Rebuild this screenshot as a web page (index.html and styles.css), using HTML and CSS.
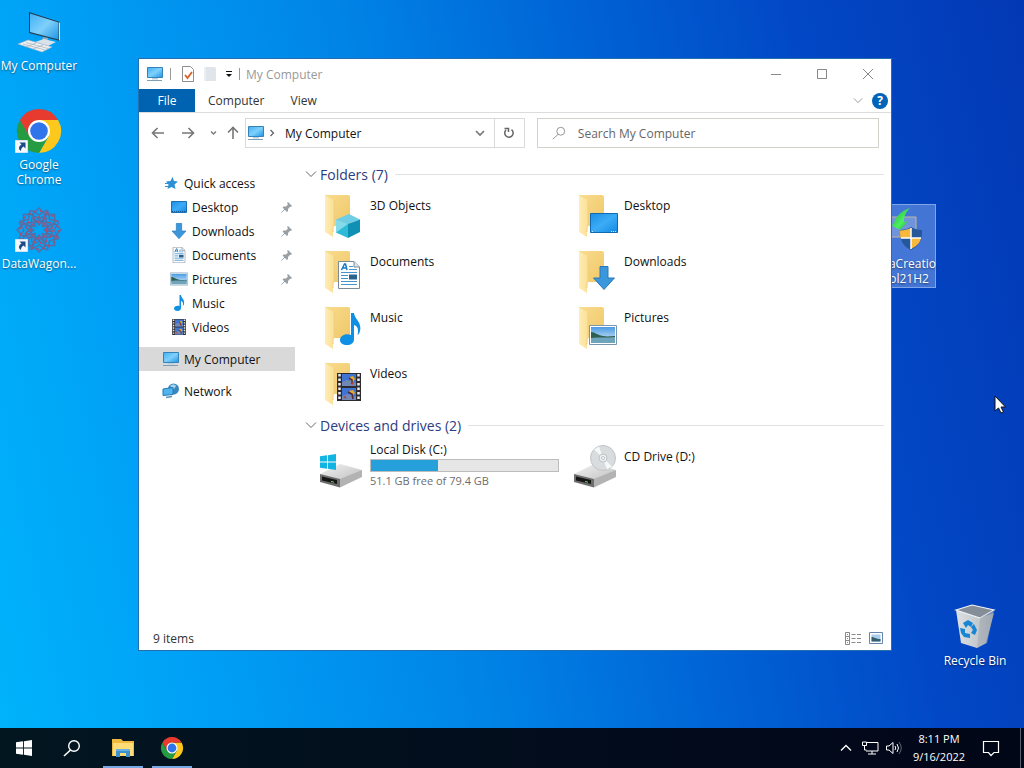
FILE: index.html
```html
<!DOCTYPE html>
<html lang="en">
<head>
<meta charset="utf-8">
<title>My Computer</title>
<link rel="stylesheet" href="styles.css">
</head>
<body>
<svg class="sprite" aria-hidden="true">
  <defs>
    <linearGradient id="g-screen" x1="0" y1="0" x2="1" y2="1"><stop offset="0" stop-color="#3fb0f5"/><stop offset=".5" stop-color="#7fd0fb"/><stop offset="1" stop-color="#1e94e4"/></linearGradient>
    <linearGradient id="g-desk" x1="0" y1="0" x2="1" y2="1"><stop offset="0" stop-color="#1b8fe6"/><stop offset=".5" stop-color="#3cacf6"/><stop offset="1" stop-color="#1389e4"/></linearGradient>
    <linearGradient id="g-folder" x1="0" y1="0" x2="1" y2="1"><stop offset="0" stop-color="#f9dc8f"/><stop offset="1" stop-color="#efc767"/></linearGradient>
    <linearGradient id="g-flap" x1="0" y1="0" x2="1" y2="0"><stop offset="0" stop-color="#ffedb4"/><stop offset="1" stop-color="#fbdf95"/></linearGradient>
    <linearGradient id="g-drive" x1="0" y1="0" x2="1" y2="1"><stop offset="0" stop-color="#f2f2f2"/><stop offset="1" stop-color="#bdbdbd"/></linearGradient>
    <linearGradient id="g-sky" x1="0" y1="0" x2="0" y2="1"><stop offset="0" stop-color="#4a9be4"/><stop offset="1" stop-color="#dff1fa"/></linearGradient>
    <linearGradient id="g-bin" x1="0" y1="0" x2="1" y2="0"><stop offset="0" stop-color="#dde1e4"/><stop offset=".6" stop-color="#c3c8cd"/><stop offset="1" stop-color="#959ba5"/></linearGradient>
    <linearGradient id="g-green" x1="0" y1="0" x2="1" y2="1"><stop offset="0" stop-color="#1fa53a"/><stop offset=".6" stop-color="#4cf060"/><stop offset="1" stop-color="#16a030"/></linearGradient>
  </defs>

  <symbol id="monitor" viewBox="0 0 18 16">
    <path d="M1.500 1.500h15v10h-15z" fill="url(#g-screen)" stroke="#3482b8"/>
    <path d="M6 12h6v1.500H6z" fill="#b8d2e2"/>
    <path d="M1 14.500h15" stroke="#7f9fb5"/>
  </symbol>
  <symbol id="folder" viewBox="0 0 48 48">
    <path d="M9 4h23q2 0 2 2v29H12z" fill="url(#g-folder)"/>
    <path d="M9 4.500l9 4.500v26l-1 1v10L9 41z" fill="url(#g-flap)"/>
    <path d="M18 9v26l-1 1v5" fill="none" stroke="#f0cf7e"/>
  </symbol>
  <symbol id="arrow-down" viewBox="0 0 22 24">
    <path d="M7 .5h8V12h6.500L11 23.500.500 12H7z" fill="#3a97dc" stroke="#2878b8"/>
  </symbol>
  <symbol id="note" viewBox="0 0 22 32">
    <path d="M12 0h3c1 7 8 9 6 18-.5 2-1 3-2.500 4 1.500-6 0-9-3.500-10v14c0 4-3 6-7 6s-7-2-7-5c0-4 5-7 11-5z" fill="#0f90e4"/>
  </symbol>
  <symbol id="document" viewBox="0 0 22 28">
    <path d="M.5.5H16L21.500 6v21.500H.5z" fill="#fff" stroke="#7c8a96"/>
    <path d="M16 .5V6h5.500" fill="#dfe5ea" stroke="#7c8a96"/>
    <path d="M3.500 9L6.500 3h1L9 9M4.500 7h4" fill="none" stroke="#1878c0" stroke-width="1.500"/>
    <path d="M11 5.500h4M11 8.500h8M3 11.500h16M3 14.500h7M3 17.500h7M3 20.500h16M3 23.500h16" stroke="#4794cb" stroke-width="1.200"/>
    <path d="M11 13.500h8v5h-8z" fill="#28648f"/>
  </symbol>
  <symbol id="picture" viewBox="0 0 28 20">
    <path d="M.5.5h27v19H.5z" fill="#fff" stroke="#7996ad"/>
    <path d="M2 2h24v16H2z" fill="url(#g-sky)"/>
    <path d="M2 7c4 0 6 3 12 4s8 0 12 0v3H2z" fill="#2f5f52"/>
    <path d="M2 13c8-1 16 0 24-1v6H2z" fill="#6fa4bd"/>
  </symbol>
  <symbol id="film" viewBox="0 0 24 28">
    <path d="M0 0h24v28H0z" fill="#2b2b30"/>
    <path d="M2.500 1v27M21.500 1v27" stroke="#eee" stroke-width="2.500" stroke-dasharray="2.500 2"/>
    <path d="M5 1h14v12H5zM5 15h14v12H5z" fill="#3f74d2"/>
    <path d="M5 9l5-2 9 3v3H5zM5 23l6-2 8 3v3H5z" fill="#7287b4"/>
    <path d="M13 4l3-1 2 3-2 3h-2zM12 18l4-1 2 3-3 3z" fill="#e8a920"/>
    <path d="M12 5l3 2v4M11 19l4 2 1 5" stroke="#4c2637" stroke-width="1.500" fill="none"/>
    <path d="M14 9l3 1-2 2zM6 24l3-1v3z" fill="#c03b2c"/>
  </symbol>
  <symbol id="cube" viewBox="0 0 24 24">
    <path d="M0 5.500L13 0l11 5.500L12 10z" fill="#6fcde6"/>
    <path d="M0 5.500L12 10v14L0 18.500z" fill="#2fbad5"/>
    <path d="M0 5.500L12 10 0 18.500z" fill="#a5e8f2" opacity=".7"/>
    <path d="M24 5.500L12 10v14l12-6z" fill="#0e91b4"/>
  </symbol>
  <symbol id="chrome" viewBox="0 0 48 48">
    <path d="M24 13h19.100A22 22 0 0 1 24 46l9.500-16.500z" fill="#fbc81b"/>
    <path d="M4.900 13A22 22 0 0 0 24 46l9.500-16.500L24 24l-9.500 5.500z" fill="#269c42"/>
    <path d="M4.900 13l9.600 16.500L24 13h19.100A22 22 0 0 0 4.900 13z" fill="#e63b2e"/>
    <circle cx="24" cy="24" r="11" fill="#fff"/>
    <circle cx="24" cy="24" r="8.800" fill="#2f74ea"/>
  </symbol>
  <symbol id="shortcut" viewBox="0 0 13 13">
    <path d="M.5.5h12v12H.5z" fill="#f5f9fd" stroke="#d3e2ee"/>
    <path d="M4.500 2.500H10.500v6L8.500 6.500C6.500 8 6 9 6 11 3 9 3.500 6.500 6.500 4.500z" fill="#1c4a86"/>
  </symbol>
  <symbol id="pin" viewBox="0 0 12 12">
    <path d="M7 1l4 4-1 1-1-.3-2 2.300v2L6 11 1.500 6.500l1-1H5L7 3.500 6 2z" fill="#989fa5"/><path d="M4 8l-3.500 3.500" stroke="#989fa5"/>
  </symbol>
  <symbol id="drive" viewBox="0 0 48 48">
    <path d="M4 32L24 22 46 28 24 41z" fill="url(#g-drive)"/>
    <path d="M4 32l20 5v8.500L4 40z" fill="#6d6d6d"/>
    <path d="M6 34.500l15 3.500v4L6 38.500z" fill="#161616"/>
    <path d="M24 37l22-9v7L24 45.500z" fill="#b3b3b3"/>
    <path d="M15 39.500l3 .7" stroke="#6be06b"/>
  </symbol>
  <symbol id="chev" viewBox="0 0 12 8"><path d="M1 1.500l5 5 5-5" fill="none" stroke="currentColor"/></symbol>
  <symbol id="winlogo" viewBox="0 0 18 18">
    <path d="M0 2.500L8 1.400V8.500H0zM9 1.300L18 0v8.500H9zM0 9.500h8v7.100L0 15.500zM9 9.500h9V18L9 16.700z" fill="currentColor"/>
  </symbol>
  <symbol id="arrow" viewBox="0 0 14 12"><path d="M13 6H2M6.500 1L1.500 6l5 5" fill="none" stroke="currentColor" stroke-width="1.600"/></symbol>
  <symbol id="glass" viewBox="0 0 16 16"><circle cx="10" cy="6" r="4.500" fill="none" stroke="currentColor"/><path d="M7 9.500L1 15" stroke="currentColor"/></symbol>
</svg>

<main class="desktop">
  <div class="shortcuts-left">
    <a class="shortcut" href="#my-computer">
      <svg class="icon-48" viewBox="0 0 48 48">
        <path d="M14 4l31 10v19L14 25z" fill="#253d50"/><path d="M15 5.500l28.500 9V31.500L15 24z" fill="url(#g-screen)"/><path d="M44.500 14.500v18" stroke="#d8e4ec"/>
        <path d="M28 29l5 1v3l-6-1z" fill="#96a8b5"/><path d="M20 34l9-3 12 3-8 4z" fill="#d9e2e8"/>
        <path d="M3 36l10-4 24 7-10 5z" fill="#eef1f3" stroke="#a9b5be" stroke-width=".6"/><path d="M8 36l22 6M11 34.500l22 6M11 39l10-4M18 41l10-4" stroke="#a4b0b9" stroke-width=".7"/>
      </svg>
      <span class="shortcut-label">My Computer</span>
    </a>
    <a class="shortcut" href="#chrome-app">
      <span class="badged"><svg class="icon-48"><use href="#chrome"/></svg><svg class="badge"><use href="#shortcut"/></svg></span>
      <span class="shortcut-label">Google Chrome</span>
    </a>
    <a class="shortcut" href="#datawagon">
      <span class="badged">
        <svg class="icon-48" viewBox="-24 -24 48 48">
          <g fill="none" stroke="#5c6aa4" stroke-width="1.400">
            <path id="petal" d="M0-5L7-15 0-22-7-15zM-4-7L4-14M4-7L-4-14M-8-20L0-15 8-20"/>
            <use href="#petal" transform="rotate(45)"/><use href="#petal" transform="rotate(90)"/><use href="#petal" transform="rotate(135)"/><use href="#petal" transform="rotate(180)"/><use href="#petal" transform="rotate(225)"/><use href="#petal" transform="rotate(270)"/><use href="#petal" transform="rotate(315)"/>
          </g>
          <g fill="none" stroke="#a8506f" stroke-width="2" stroke-dasharray="2 4"><circle r="19"/><circle r="13"/><circle r="8"/></g>
        </svg>
        <svg class="badge"><use href="#shortcut"/></svg>
      </span>
      <span class="shortcut-label">DataWagon...</span>
    </a>
  </div>

  <a class="shortcut selected media-tool" href="#media">
    <svg class="icon-48" viewBox="0 0 48 48">
      <path d="M10 11h31v20H10z" fill="#6f94dc" stroke="#c2b49b"/>
      <path d="M35 2C26 5 20 11 19 18l-3 1 9 5 8-9-4 1c0-6 1-9 6-14z" fill="url(#g-green)"/>
      <path d="M36 21c3 2 7 3 11 3 0 9-2 16-11 20-9-4-11-11-11-20 4 0 8-1 11-3z" fill="#27579b"/>
      <path d="M36 32H26c2 5 4 8 10 11zM36 22v10h10c.4-3 .5-5 .5-7.500-4 0-8-1-10.500-2.500z" fill="#27579b"/>
      <path d="M36 22v10H25.500c-.4-3-.5-5-.5-7.500 4 0 8-1 11-2.500zM36 32v11c6-3 9-6 10-11z" fill="#f8b83a"/>
      <path d="M36 22v21M26 32h20" stroke="#fff" stroke-width="1.500"/>
    </svg>
    <span class="shortcut-label">MediaCreatio<br>nTool21H2</span>
  </a>

  <a class="shortcut recycle" href="#bin">
    <svg class="icon-48" viewBox="0 0 48 48">
      <path d="M5 7l5 33 16 5 9-5 8-30-15 5z" fill="url(#g-bin)"/>
      <path d="M5 7l16-5 22 5-14 8z" fill="#858d98" stroke="#f2f5f7" stroke-width="1.200"/>
      <path d="M29 15l-3 30 10-5 7-33z" fill="#a8adb5" opacity=".65"/>
      <path d="M12 20l5-3 5 3-2 4-3-2-2 3zM23 21l3 6-2 5-4-2 2-3-2-3zM9 25l5 1v4l5 1v4l-6-1-3-4z" fill="#1685d4"/>
    </svg>
    <span class="shortcut-label">Recycle Bin</span>
  </a>

  <section class="window" id="my-computer" aria-label="My Computer">
    <header class="titlebar">
      <svg class="icon-wide"><use href="#monitor"/></svg>
      <span class="divider"></span>
      <button class="plain" aria-label="Properties"><svg width="14" height="16" viewBox="0 0 14 16"><path d="M1.500.5h8l3 3v12h-11z" fill="#fff" stroke="#8e8e8e"/><path d="M4 9l2.500 3L11 6" fill="none" stroke="#d9602c" stroke-width="1.800"/></svg></button>
      <button class="plain" aria-label="New folder"><svg width="14" height="16" viewBox="0 0 14 16"><path d="M1 1h10l2 1v13H1z" fill="#dfe5ea"/><path d="M1 1h2v14H1z" fill="#ebeff2"/></svg></button>
      <button class="plain caret" aria-label="Customize toolbar"><svg width="8" height="8" viewBox="0 0 8 8"><path d="M1 1.500h6" stroke="#111"/><path d="M1 4h6L4 7z" fill="#111"/></svg></button>
      <span class="divider"></span>
      <h1 class="title">My Computer</h1>
      <div class="window-buttons">
        <button class="plain" aria-label="Minimize"><svg width="12" height="12"><path d="M1 6.500h10" stroke="#888"/></svg></button>
        <button class="plain" aria-label="Maximize"><svg width="12" height="12"><path d="M1.500 1.500h9v9h-9z" stroke="#888" fill="none"/></svg></button>
        <button class="plain" aria-label="Close"><svg width="12" height="12"><path d="M1 1l10 10M11 1L1 11" stroke="#888"/></svg></button>
      </div>
    </header>

    <nav class="ribbon" aria-label="Ribbon">
      <button class="tab tab-file">File</button>
      <button class="tab">Computer</button>
      <button class="tab">View</button>
      <button class="plain expand" aria-label="Expand the ribbon"><svg width="10" height="7"><use href="#chev"/></svg></button>
      <button class="help" aria-label="Help">?</button>
    </nav>

    <div class="navbar">
      <button class="plain nav-btn" aria-label="Back"><svg width="14" height="12"><use href="#arrow"/></svg></button>
      <button class="plain nav-btn" aria-label="Forward"><svg class="flip" width="14" height="12"><use href="#arrow"/></svg></button>
      <button class="plain nav-small" aria-label="Recent locations"><svg width="7" height="6" viewBox="0 0 7 6"><path d="M1 1.500L3.500 4 6 1.500" fill="none" stroke="currentColor" stroke-width="1.300"/></svg></button>
      <button class="plain nav-small" aria-label="Up"><svg class="up" width="14" height="12"><use href="#arrow"/></svg></button>
      <div class="address">
        <svg class="icon-wide"><use href="#monitor"/></svg>
        <svg width="12" height="8" viewBox="0 0 12 8"><path d="M5.500 1l3 3-3 3" fill="none" stroke="#666" stroke-width="1.300"/></svg>
        <a class="crumb" href="#my-computer">My Computer</a>
        <button class="plain drop" aria-label="Previous locations"><svg width="10" height="8" viewBox="0 0 10 8"><path d="M1 2l4 4 4-4" fill="none" stroke="#777" stroke-width="1.700"/></svg></button>
        <button class="plain refresh" aria-label="Refresh"><svg width="12" height="12" viewBox="0 0 12 12"><path d="M3 3a4.200 4.200 0 1 0 5.500-.3M1.500 1.500h4V5" fill="none" stroke="#666" stroke-width="1.500"/></svg></button>
      </div>
      <label class="search"><svg width="14" height="14"><use href="#glass"/></svg><input class="search-input" type="search" placeholder="Search My Computer" aria-label="Search My Computer"></label>
    </div>

    <div class="body">
      <nav class="sidebar" aria-label="Navigation pane">
        <a class="side-item" href="#quick"><svg class="side-icon" viewBox="0 0 18 16"><path d="M10.500 2l1.500 4 4 .5-3.500 3 1 4.500-4-2-4 2 1-4.500L4 6.500l4.500-.5z" fill="#2d8fd4"/><path d="M3 11.500h4M3 8.500h3" stroke="#2d8fd4"/></svg>Quick access</a>
        <a class="side-item child" href="#desktop"><svg class="side-icon" viewBox="0 0 18 16"><path d="M1.500 2.500h15v11h-15z" fill="url(#g-desk)" stroke="#1a6fb5"/><path d="M2 12.500h14" stroke="#135c9c" stroke-dasharray="1 1"/></svg><span>Desktop</span><svg class="pin"><use href="#pin"/></svg></a>
        <a class="side-item child" href="#downloads"><svg class="side-icon"><use href="#arrow-down"/></svg><span>Downloads</span><svg class="pin"><use href="#pin"/></svg></a>
        <a class="side-item child" href="#documents"><svg class="side-icon"><use href="#document"/></svg><span>Documents</span><svg class="pin"><use href="#pin"/></svg></a>
        <a class="side-item child" href="#pictures"><svg class="side-icon"><use href="#picture"/></svg><span>Pictures</span><svg class="pin"><use href="#pin"/></svg></a>
        <a class="side-item child" href="#music"><svg class="side-icon"><use href="#note"/></svg><span>Music</span></a>
        <a class="side-item child" href="#videos"><svg class="side-icon"><use href="#film"/></svg><span>Videos</span></a>
        <a class="side-item root current" href="#my-computer"><svg class="side-icon"><use href="#monitor"/></svg>My Computer</a>
        <a class="side-item root" href="#network"><svg class="side-icon" viewBox="0 0 18 16"><circle cx="11.500" cy="6" r="5.500" fill="#3b87bd"/><path d="M8 3c2-2 5-2 6 0l-2 3z" fill="#a5d6f0"/><path d="M1 6l10-1.500v7L1 12.500z" fill="#4eb5ef" stroke="#2678b2"/><path d="M4 14.500l6-1" stroke="#5b92b4" stroke-width="1.500"/></svg>Network</a>
      </nav>

      <div class="content">
        <section class="group">
          <h2 class="group-head"><svg width="12" height="8"><use href="#chev"/></svg>Folders (7)</h2>
          <div class="tiles">
            <a class="tile" href="#3d"><span class="badged"><svg class="icon-48"><use href="#folder"/></svg><svg class="overlay o-cube"><use href="#cube"/></svg></span><span class="tile-text">3D Objects</span></a>
            <a class="tile" href="#desktop"><span class="badged"><svg class="icon-48"><use href="#folder"/></svg><svg class="overlay o-desk" viewBox="0 0 28 20"><path d="M.5.5h27v19H.5z" fill="url(#g-desk)" stroke="#1169ae"/><path d="M2 18.500h2M21 18.500h5" stroke="#c9e8ff" stroke-dasharray="1 1"/></svg></span><span class="tile-text">Desktop</span></a>
            <a class="tile" href="#documents"><span class="badged"><svg class="icon-48"><use href="#folder"/></svg><svg class="overlay o-doc"><use href="#document"/></svg></span><span class="tile-text">Documents</span></a>
            <a class="tile" href="#downloads"><span class="badged"><svg class="icon-48"><use href="#folder"/></svg><svg class="overlay o-down"><use href="#arrow-down"/></svg></span><span class="tile-text">Downloads</span></a>
            <a class="tile" href="#music"><span class="badged"><svg class="icon-48"><use href="#folder"/></svg><svg class="overlay o-note"><use href="#note"/></svg></span><span class="tile-text">Music</span></a>
            <a class="tile" href="#pictures"><span class="badged"><svg class="icon-48"><use href="#folder"/></svg><svg class="overlay o-pic"><use href="#picture"/></svg></span><span class="tile-text">Pictures</span></a>
            <a class="tile" href="#videos"><span class="badged"><svg class="icon-48"><use href="#folder"/></svg><svg class="overlay o-film"><use href="#film"/></svg></span><span class="tile-text">Videos</span></a>
          </div>
        </section>
        <section class="group">
          <h2 class="group-head"><svg width="12" height="8"><use href="#chev"/></svg>Devices and drives (2)</h2>
          <div class="tiles">
            <a class="tile" href="#c"><span class="badged"><svg class="icon-48"><use href="#drive"/></svg><svg class="overlay o-win"><use href="#winlogo"/></svg></span>
              <span class="disk"><span id="disk-c">Local Disk (C:)</span><progress class="usage" value="36" max="100" aria-labelledby="disk-c"></progress><span class="free">51.1 GB free of 79.4 GB</span></span></a>
            <a class="tile" href="#d"><svg class="icon-48" viewBox="0 0 48 48"><use href="#drive"/><circle cx="33" cy="16" r="12.500" fill="#d9dcde" stroke="#c0c5c8"/><path d="M33 16L24 7.500l5-3zM33 16l9 8.500-5 3z" fill="#f6f8f8"/><circle cx="33" cy="16" r="4" fill="#eef0f0" stroke="#bcc2c5"/><circle cx="33" cy="16" r="1.500" fill="#fff" stroke="#bcc2c5"/></svg><span class="tile-text">CD Drive (D:)</span></a>
          </div>
        </section>
      </div>
    </div>

    <footer class="status">
      <span>9 items</span>
      <button class="plain" aria-label="Details view"><svg width="16" height="13" viewBox="0 0 16 13"><path d="M.5.500h4v12h-4zM.5 4.500h4M.5 8.500h4M2 2.500h1M2 6.500h1M2 10.500h1M6.500 2.500h4M12 2.500h4M6.500 6.500h4M12 6.500h4M6.500 10.500h4M12 10.500h4" fill="none" stroke="#888"/></svg></button>
      <button class="plain" aria-label="Large icons view"><svg width="14" height="12" viewBox="0 0 14 12"><path d="M.5.5h13v11H.5z" fill="#fff" stroke="#6684ac"/><path d="M2.500 2.500h9v7h-9z" fill="#a9cdea"/><path d="M2.500 5c3 0 4 2 9 2v2.500h-9z" fill="#345f70"/></svg></button>
    </footer>
  </section>

  <svg class="pointer" viewBox="0 0 12 19"><path d="M1 1v15l3.500-3 2.500 5 2.500-1L7 12h4.500z" fill="#fff" stroke="#111"/></svg>
</main>

<footer class="taskbar">
  <button class="task" aria-label="Start"><svg width="16" height="16"><use href="#winlogo"/></svg></button>
  <button class="task" aria-label="Search"><svg width="18" height="18" viewBox="0 0 18 18"><circle cx="11" cy="7" r="5.300" fill="none" stroke="#fff" stroke-width="1.400"/><path d="M7.500 11L1 17" stroke="#fff" stroke-width="1.600"/></svg></button>
  <div class="running">
    <button class="task open" aria-label="File Explorer"><svg width="22" height="20" viewBox="0 0 22 20"><path d="M0 1h9l2 2h11v15H0z" fill="#f0b93f"/><path d="M1 5h20v13H1z" fill="#ffdc76"/><path d="M4 19v-8h14v8h-4v-4H8v4z" fill="#3f90ce"/><path d="M4 11h14v2H4z" fill="#66b0e2"/></svg></button>
    <button class="task open" aria-label="Google Chrome"><svg width="24" height="24"><use href="#chrome"/></svg></button>
  </div>
  <div class="tray">
    <button class="tray-btn" aria-label="Show hidden icons"><svg width="12" height="8" viewBox="0 0 12 8"><path d="M1 6.500l5-5 5 5" fill="none" stroke="#fff" stroke-width="1.300"/></svg></button>
    <button class="tray-btn" aria-label="Network"><svg width="17" height="14" viewBox="0 0 17 14"><path d="M5 1.500h11v8.500H4M10 10v3M6 13h8M.500 1h4v3.500h-4zM2.500 4.500V9h2" fill="none" stroke="#fff"/></svg></button>
    <button class="tray-btn" aria-label="Volume"><svg width="17" height="14" viewBox="0 0 17 14"><path d="M.5 5h2.500L7 1.500v11L3 9H.5zM9 5q1.500 2 0 4M11 3q3 4 0 8" fill="none" stroke="#fff"/><path d="M13 1q4.500 6 0 12" fill="none" stroke="#5b6676"/></svg></button>
    <button class="clock"><time datetime="2022-09-16T20:11">8:11 PM<br>9/16/2022</time></button>
    <button class="notify" aria-label="Notifications"><svg width="18" height="17" viewBox="0 0 18 17"><path d="M1.500 1.500h15v11H12L9 15.500 6.500 12.500h-5z" fill="none" stroke="#fff" stroke-width="1.200"/></svg></button>
    <button class="show-desktop" aria-label="Show desktop"></button>
  </div>
</footer>
</body>
</html>
```
FILE: styles.css
```css
* { box-sizing: border-box; }

body {
  margin: 0;
  height: 100vh;
  display: flex;
  flex-direction: column;
  overflow: hidden;
  font-family: "Open Sans", "Noto Sans", sans-serif;
  font-size: 12px;
  line-height: 15px;
  color: #111;
  background: linear-gradient(78deg, #00b4fb 0%, #00a0f6 18%, #0084e6 42%, #0060d4 64%, #0248c6 80%, #0338b4 100%);
}

button { font: inherit; color: inherit; border: 0; padding: 0; background: none; }
a { color: inherit; text-decoration: none; }
svg { display: block; flex: none; }
.sprite { position: absolute; width: 0; height: 0; }
.plain { display: flex; align-items: center; justify-content: center; }
.icon-48 { width: 48px; height: 48px; }
.icon-wide { width: 18px; height: 16px; }
.badged { position: relative; flex: none; }
.badge { position: absolute; left: 0; bottom: 2px; width: 13px; height: 13px; }

/* Desktop */
.desktop { flex: 1; position: relative; min-height: 0; }
.shortcuts-left { padding-top: 8px; width: 78px; }
.shortcut {
  display: flex;
  flex-direction: column;
  align-items: center;
  gap: 2px;
  color: #fff;
  text-align: center;
  text-shadow: 0 1px 2px #00000080;
}
.shortcuts-left .shortcut { min-height: 99px; }
.recycle { position: absolute; right: 10px; bottom: 60px; width: 78px; }
.media-tool { position: absolute; left: 861px; top: 204px; width: 75px; padding: 1px 0; }
.selected { background: #6b95e2a0; border: 1px solid #7fa5e8; }
.pointer { position: absolute; left: 994px; top: 395px; width: 12px; height: 19px; }

/* Window */
.window {
  position: absolute;
  inset: 58px 132px 77px 138px;
  display: flex;
  flex-direction: column;
  background: #fff;
  border: 1px solid #236fb0;
}
.titlebar { display: flex; align-items: center; height: 30px; padding-left: 7px; }
.titlebar .divider { width: 1px; height: 12px; margin: 0 6px; background: #999; }
.titlebar .icon-wide + .divider { margin-right: 10px; }
.titlebar > .plain + .plain { margin-left: 8px; }
.title { margin: 0; font-size: 12px; font-weight: 400; color: #999; }
.window-buttons { display: flex; margin-left: auto; }
.window-buttons .plain { width: 46px; height: 30px; }

.ribbon { display: flex; align-items: center; height: 24px; border-bottom: 1px solid #dcdcdc; color: #333; }
.tab { height: 23px; padding: 0 13px; }
.tab-file { width: 56px; background: #0063b1; color: #fff; }
.expand { margin-left: auto; width: 20px; color: #888; }
.help { width: 16px; height: 16px; margin: 0 3px 0 4px; border-radius: 50%; background: #0064b8; color: #fff; font-weight: 700; }

.navbar { display: flex; align-items: center; height: 40px; padding: 0 12px 0 4px; }
.nav-btn { width: 30px; height: 24px; color: #777; }
.nav-small { width: 20px; height: 24px; color: #777; }
.flip { transform: rotate(180deg); }
.up { transform: rotate(90deg); }
.address { flex: 47; display: flex; align-items: center; height: 30px; margin-left: 2px; padding-left: 1px; border: 1px solid #d9d9d9; }
.crumb { flex: 1; padding-left: 8px; }
.drop { width: 28px; height: 28px; }
.refresh { width: 30px; height: 28px; border-left: 1px solid #d9d9d9; }
.search { flex: 53; display: flex; align-items: center; gap: 12px; height: 30px; margin-left: 12px; padding: 0 14px; border: 1px solid #d3d3cb; color: #888; }
.search-input { flex: 1; min-width: 0; padding: 0; border: 0; outline: 0; background: none; font: inherit; color: #333; }
.search-input::placeholder { color: #666; opacity: 1; }

.body { flex: 1; display: flex; min-height: 0; }
.sidebar { width: 156px; padding-top: 18px; }
.side-item { display: flex; align-items: center; gap: 4px; height: 24px; padding: 0 2px 0 23px; }
.side-item.child { padding-left: 31px; }
.side-item.root { margin-top: 8px; }
.current { background: #d9d9d9; }
.side-icon { width: 18px; height: 16px; }
.pin { width: 12px; height: 12px; margin-left: auto; }

.content { flex: 1; padding: 11px 7px 0 10px; overflow: hidden; }
.group-head { display: flex; align-items: center; gap: 3px; margin: 0; height: 20px; font-size: 14px; font-weight: 400; color: #2c3c80; }
.group-head svg { color: #666; }
.group-head::after { content: ""; flex: 1; height: 1px; margin-left: 4px; background: #e2e2e2; }
.tiles { display: grid; grid-template-columns: repeat(auto-fill, 254px); grid-auto-rows: 56px; padding: 7px 0 0 11px; }
.tile { display: flex; gap: 6px; }
.tile-text { padding-top: 7px; }
.disk { display: flex; flex-direction: column; width: 190px; }
.usage { appearance: none; width: 189px; height: 13px; margin: 2px 0 1px; border: 1px solid #bcbcbc; background: #e6e6e6; }
.usage::-webkit-progress-bar { background: #e6e6e6; }
.usage::-webkit-progress-value { background: #26a0da; }
.free { font-size: 11px; color: #6d6d6d; }

/* Emblems laid over the folder and drive icons */
.overlay { position: absolute; }
.o-cube { left: 20px; top: 23px; width: 24px; height: 24px; }
.o-desk { left: 20px; top: 22px; width: 28px; height: 20px; }
.o-doc { left: 22px; top: 14px; width: 22px; height: 28px; }
.o-down { left: 23px; top: 19px; width: 22px; height: 24px; }
.o-note { left: 23px; top: 10px; width: 22px; height: 32px; }
.o-pic { left: 19px; top: 22px; width: 28px; height: 20px; }
.o-film { left: 21px; top: 14px; width: 24px; height: 28px; }
.o-win { left: 4px; top: 12px; width: 16px; height: 16px; color: #12b4e2; }

.status { display: flex; align-items: center; gap: 8px; height: 24px; padding: 0 8px 0 14px; color: #333; }
.status span { flex: 1; }

/* Taskbar */
.taskbar { display: flex; height: 40px; color: #fff; background: linear-gradient(90deg, #021620, #020b1c 60%, #020718); }
.task { width: 48px; height: 40px; display: flex; align-items: center; justify-content: center; }
.running { display: flex; gap: 1px; margin-left: 3px; }
.open { background: linear-gradient(#76a9e4, #76a9e4) center bottom / 40px 2px no-repeat; }
.tray { display: flex; align-items: center; margin-left: auto; }
.tray-btn { display: flex; align-items: center; justify-content: center; width: 24px; height: 40px; }
.clock { width: 66px; height: 40px; font-size: 11px; line-height: 18px; }
.notify { display: flex; align-items: center; justify-content: center; width: 38px; height: 40px; margin-right: 10px; }
.show-desktop { width: 4px; height: 40px; border-left: 1px solid #59636f; }
```
